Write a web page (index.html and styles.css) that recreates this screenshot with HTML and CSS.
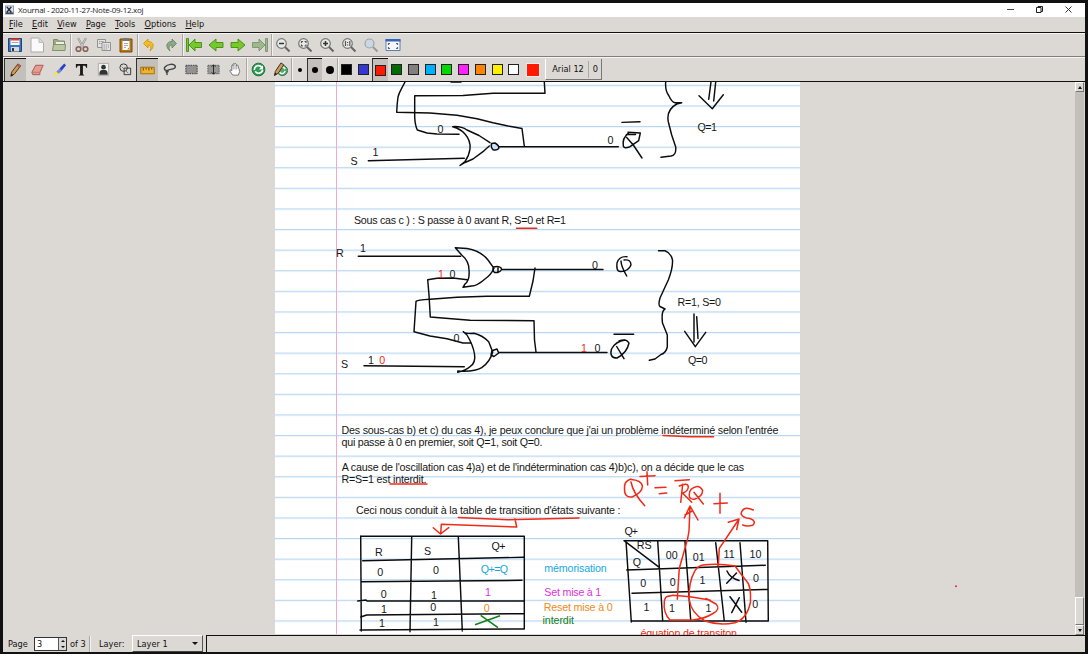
FILE: index.html
```html
<!DOCTYPE html>
<html lang="fr">
<head>
<meta charset="utf-8">
<title>Xournal - 2020-11-27-Note-09-12.xoj</title>
<link rel="stylesheet" href="styles.css">
</head>
<body>
<div class="window">
  <header class="titlebar">
    <svg class="appicon" viewBox="0 0 10 10"><rect x=".5" y=".5" width="9" height="9" fill="#dce3ee" stroke="#8a93a0"/><path d="M2 1.500l5 6M7 1.500l-5 6M1 8.500h8" stroke="#1b2438" stroke-width="1.500"/></svg>
    <span class="title">Xournal - 2020-11-27-Note-09-12.xoj</span>
    <svg class="winctl" viewBox="0 0 70 12"><path d="M1 5.500h7" stroke="#444"/><path d="M30.500 3.500h4.500v5h-4.500zM32 3.500v-1h4.500v5h-1.500" fill="none" stroke="#222"/><path d="M59.500 2.500l6 6M65.500 2.500l-6 6" stroke="#333" stroke-width="1"/></svg>
  </header>
  <nav class="menubar"><span><u>F</u>ile</span><span><u>E</u>dit</span><span><u>V</u>iew</span><span><u>P</u>age</span><span><u>T</u>ools</span><span><u>O</u>ptions</span><span><u>H</u>elp</span></nav>

  <div class="toolbar">
    <i class="btn"><svg viewBox="0 0 16 16"><path d="M1.500 1.500h13v13h-13z" fill="#3b76c0" stroke="#1d4378"/><path d="M3.500 2h9v6h-9z" fill="#fff"/><path d="M3.500 1.500h9v2h-9z" fill="#e23b2e"/><path d="M4.500 5.500h7" stroke="#aaa"/><path d="M4 10h8v4.500H4z" fill="#d8d8d8"/><path d="M5 11h2v3H5z" fill="#333"/></svg></i>
    <i class="btn"><svg viewBox="0 0 16 16"><path d="M2 1h8l4.500 4.500v9.500H2z" fill="#fafafa" stroke="#aaa"/><path d="M10 1v4.500h4.500z" fill="#ddd" stroke="#bbb"/></svg></i>
    <i class="btn"><svg viewBox="0 0 16 16"><path d="M2.500 13.500v-11h4l1 1.500h6v9" fill="#9cab82" stroke="#7f8c69"/><path d="M5 5h8v6H5z" fill="#eee"/><path d="M1.500 13.500l1-6h12l-.5 6z" fill="#bac9a0" stroke="#82906b"/></svg></i>
    <b class="sep"></b>
    <i class="btn"><svg viewBox="0 0 16 16"><path d="M4 1l5 9M12 1l-5 9" stroke="#8c8c8c" stroke-width="2"/><path d="M4 1l5 9M12 1l-5 9" stroke="#e4e4e4" stroke-width=".7"/><circle cx="4.500" cy="12" r="2.300" fill="none" stroke="#84625a" stroke-width="1.600"/><circle cx="11.500" cy="12" r="2.300" fill="none" stroke="#84625a" stroke-width="1.600"/></svg></i>
    <i class="btn"><svg viewBox="0 0 16 16"><g fill="#e3e3e3" stroke="#929292"><path d="M1.500 2.500h8v8h-8z"/><path d="M6 5.500h8.500v8H6z"/></g><path d="M3 4.500h5M3 6.500h3M7.500 8h5.500M7.500 10h5.500M7.500 12h4" stroke="#999" stroke-dasharray="1.500 .7"/></svg></i>
    <i class="btn"><svg viewBox="0 0 16 16"><path d="M2 2h12v13H2z" fill="#b97716" stroke="#7a4a08"/><path d="M4.500 4h7v9h-7z" fill="#fff"/><path d="M5 1h6v3H5z" fill="#777"/><path d="M6 6.500h4M6 8.500h4M6 10.500h2" stroke="#aaa"/><path d="M9 12.500l2-2v2z" fill="#888"/></svg></i>
    <b class="sep"></b>
    <i class="btn"><svg viewBox="0 0 16 16"><path d="M7 2L2.500 6.500 7 11V8c3 0 3.500 2.500 2 6 5-4 4-9.500-2-9.500z" fill="#f5bd20" stroke="#c79008" stroke-width=".8"/></svg></i>
    <i class="btn"><svg viewBox="0 0 16 16"><path d="M9 2l4.500 4.500L9 11V8c-3 0-3.500 2.500-2 6C2 10 3 4.500 9 4.500z" fill="#8aaa83" stroke="#66805f" stroke-width=".8"/></svg></i>
    <b class="sep"></b>
    <i class="btn"><svg viewBox="0 0 16 16" class="nav"><path d="M.5 1.500h2v13h-2zM3 8l6-6v3.500h6.500v5H9V14z"/></svg></i>
    <i class="btn"><svg viewBox="0 0 16 16" class="nav"><path d="M1 8l7-6v3.500h7v5H8V14z"/></svg></i>
    <i class="btn"><svg viewBox="0 0 16 16" class="nav"><path d="M15 8L8 2v3.500H1v5h7V14z"/></svg></i>
    <i class="btn"><svg viewBox="0 0 16 16" class="nav off"><path d="M13.500 1.500h2v13h-2zM13 8L7 2v3.500H.5v5H7V14z"/></svg></i>
    <b class="sep"></b>
    <i class="btn"><svg viewBox="0 0 16 16" class="lens"><circle cx="6.500" cy="6.500" r="4.800"/><path class="h" d="M10 10l4.500 4.500"/><path d="M4 6.500h5" class="m"/></svg></i>
    <i class="btn"><svg viewBox="0 0 16 16" class="lens"><circle cx="6.500" cy="6.500" r="4.800"/><path class="h" d="M10 10l4.500 4.500"/><path d="M4.500 6V4.500H6M7.500 4.500H9V6M9 7.500V9H7.500M6 9H4.500V7.500" class="s"/></svg></i>
    <i class="btn"><svg viewBox="0 0 16 16" class="lens"><circle cx="6.500" cy="6.500" r="4.800"/><path class="h" d="M10 10l4.500 4.500"/><path d="M4 6.500h5M6.500 4v5" class="m"/></svg></i>
    <i class="btn"><svg viewBox="0 0 16 16" class="lens"><circle cx="6.500" cy="6.500" r="4.800"/><path class="h" d="M10 10l4.500 4.500"/><path d="M4.500 4v5M8.800 4v5M6.600 5v1M6.600 7.500v1" class="s"/></svg></i>
    <i class="btn"><svg viewBox="0 0 16 16" class="lens pale"><circle cx="6.500" cy="6.500" r="4.500"/><path class="h" d="M10 10l4.500 4.500"/></svg></i>
    <i class="btn"><svg viewBox="0 0 16 16"><path d="M1 2.500h14v11H1z" fill="#f6f8fb" stroke="#5d7fb0"/><path d="M.5 2h15v2.500H.5z" fill="#3567b8"/><path d="M3.500 8V6.500H5M11 6.500h1.500V8M12.500 10v1.500H11M5 11.500H3.500V10" fill="none" stroke="#59657b" stroke-width="1.200"/></svg></i>
  </div>

  <div class="toolbar second">
    <i class="btn on"><svg viewBox="0 0 16 16"><path d="M3 14l1-4.500 6.500-8.500 3 2L7 11.500z" fill="#d49a52" stroke="#50300f"/><path d="M10.500 1l3 2-1.500 2-3-2z" fill="#b65e57"/><path d="M3 14.500l.7-3 2 1.500z" fill="#111"/></svg></i>
    <i class="btn"><svg viewBox="0 0 16 16"><path d="M2 11L6 3.500h8l-3.500 8v2H3z" fill="#eb9a90" stroke="#9a5b54"/><path d="M2 11h8.500L14 3.500" fill="none" stroke="#c4736a"/></svg></i>
    <i class="btn"><svg viewBox="0 0 16 16"><path d="M8 7l5-5.500 2 2L10 9.500z" fill="#2841c9"/><path d="M4.500 10.500L8 7l2.500 2.500L7 12.500z" fill="#6e88dc"/><path d="M1.500 14.500l3-4.500 2.500 2.500z" fill="#ffe900"/></svg></i>
    <i class="btn"><svg viewBox="0 0 16 16"><path d="M2 2h12v4h-1l-1-2H9.500v9l1.500 1v.5H5V14l1.500-1V4H4L3 6H2z" fill="#181818"/></svg></i>
    <i class="btn"><svg viewBox="0 0 16 16"><path d="M2.500 1.500h11v13h-11z" fill="#f2f2f2" stroke="#aaa"/><circle cx="8" cy="5.500" r="2.500" fill="#333"/><path d="M3.500 13.500c0-5 2-5 4.500-5s4.500 0 4.500 5z" fill="#333"/></svg></i>
    <i class="btn"><svg viewBox="0 0 16 16" fill="none" stroke="#333"><circle cx="6" cy="6" r="4"/><path d="M6.500 6.500h7v7h-7z"/><path d="M4 5l7 7" stroke="#777"/></svg></i>
    <i class="btn on"><svg viewBox="0 0 16 16"><path d="M.8 4.500h14.400v7H.8z" fill="#edb42f" stroke="#a66b07"/><path d="M3.500 5v3M6.500 5v2M9.500 5v3M12.500 5v2" stroke="#6a4200"/></svg></i>
    <i class="btn"><svg viewBox="0 0 16 16" fill="none" stroke="#444" stroke-width="1.500"><path d="M4.500 9C0 7.500 4 3 9 2.500s7 3 3.500 4.500-7 1-8 2.500 2 2 2 0-2 1-1 4.500"/></svg></i>
    <i class="btn"><svg viewBox="0 0 16 16"><path d="M2 3.500h12v9H2z" fill="#929292" stroke="#333" stroke-dasharray="1.500 1"/></svg></i>
    <i class="btn"><svg viewBox="0 0 16 16"><path d="M2 3.500h12v9H2z" fill="#999" stroke="#555" stroke-dasharray="1.500 1"/><path d="M8 3v10M6 5l2-2 2 2M6 11l2 2 2-2" fill="none" stroke="#222"/></svg></i>
    <i class="btn"><svg viewBox="0 0 16 16"><path d="M5 14L2 9.500c-.5-1 1-1.500 2 0V4c0-1.200 1.500-1.200 1.500 0V2.500c0-1.200 1.700-1.200 1.700 0 0-1.200 1.800-1.200 1.800.3V4c0-1.200 1.700-1 1.700.3L12.500 10 11 14z" fill="#fff" stroke="#555" stroke-width=".8"/><path d="M5.500 4v4M7.500 3v5M9.300 4v4" stroke="#777" stroke-width=".7"/></svg></i>
    <b class="sep"></b>
    <i class="btn"><svg viewBox="0 0 16 16"><circle cx="8" cy="8" r="6.800" fill="#2f9b53" stroke="#186f35"/><path d="M3.500 8.500c0-5 6-6 8-2.500M12.500 8.500c-1 4-6 4.500-8 1.500" fill="none" stroke="#fff" stroke-width="1.700"/><path d="M12.800 3.500v4.500H8.500z" fill="#fff"/></svg></i>
    <i class="btn"><svg viewBox="0 0 16 16"><circle cx="10" cy="9" r="5.500" fill="#55a971" stroke="#28733e"/><path d="M7 11c2 2.500 5 1.500 6-1.500M9 5.500c2-.5 3 .5 4 2" fill="none" stroke="#fff" stroke-width="1.500"/><path d="M1.500 14.500l1-4.500L8.500 1l3 2-6 9z" fill="#cf9c60" stroke="#41270f"/><path d="M1.500 14.500l1-3 1.500 1z" fill="#111"/></svg></i>
    <b class="sep"></b>
    <i class="btn dotbtn"><em class="dot"></em></i>
    <i class="btn dotbtn on"><em class="dot d2"></em></i>
    <i class="btn dotbtn"><em class="dot d3"></em></i>
    <b class="sep"></b>
    <i class="swatch"><em class="black"></em></i>
    <i class="swatch"><em class="blue"></em></i>
    <i class="swatch on"><em class="red"></em></i>
    <i class="swatch"><em class="green"></em></i>
    <i class="swatch"><em class="gray"></em></i>
    <i class="swatch"><em class="cyan"></em></i>
    <i class="swatch"><em class="lime"></em></i>
    <i class="swatch"><em class="magenta"></em></i>
    <i class="swatch"><em class="orange"></em></i>
    <i class="swatch"><em class="yellow"></em></i>
    <i class="swatch"><em class="white"></em></i>
    <i class="current"></i>
    <span class="fontbtn"><span>Arial 12</span><span class="fsize">0</span></span>
  </div>

  <main class="work">
    <svg class="sheet" width="1072" height="553" viewBox="3 82 1072 553">
      <defs><pattern id="rules" x="0" y="84.800" width="40" height="20.600" patternUnits="userSpaceOnUse"><path d="M0 .6h40" stroke="#b7d7f3" stroke-width="1.200"/></pattern></defs>
      <path d="M275 82h525v552H275z" fill="#fff"/>
      <path d="M275 82h525v552H275z" fill="url(#rules)"/>
      <path d="M336.500 82v552" stroke="#f3a9cb"/>

      <g class="ink">
        <path d="M405 82C401 90 399 92 398 97Q397 104 396.700 112.300L430 113 457 115.300 477 118.700 493 122.700 508 126 522 128.500 524.300 146"/>
        <path d="M544.300 82L545 93.300H493L463 95.500 414.700 95.700V117Q415 125 417.300 130L427 133 437 134 459 134.300"/>
        <path d="M451 82h10"/>
        <path d="M452.700 126.700Q461 129 465 134Q471 141 470 149Q469 156 465 161.500L460 165.500M452.700 126.700Q461 126 467 130L479 135.500 490 142.700M489.300 146Q487 148 483 151.700L473 159 465 162.500 460 165.500"/>
        <path class="bub" d="M491.500 143.500L495 143Q499.500 145.500 498.700 148.500 497 150.500 493 149.700 490.500 147 491.500 143.500z"/>
        <path d="M368.300 160.700L464.300 158.300M499 146.700H618.300"/>
        <path d="M622 122.400L640 121.700M628.300 133.300Q622 138 623.300 146Q624 149 630 146.700L638.700 140.700 640.300 133 628 132.300M626.500 134.500h9M626.700 137.500L633.300 145 642 158"/>
        <path d="M665.700 82Q665 91 669 96Q671.700 102 675 102.700H681.700L676.700 104Q666 110 668.300 121.700L671.700 135 675.700 147Q676.500 155 671 156L661 157.300"/>
        <path d="M711 82L708.700 99.300M715.700 82L713.700 101M699 95.700L712.300 108.700 723.300 94.700"/>

        <path d="M358.300 256.300H460.700"/>
        <path d="M455.300 247.700L461.700 255Q469 261 469 270Q470 280 465 284L463 287.300M455.300 247.700L467 248.500Q481 251 488 260L494 268.300Q491 275 485 279Q477 286 471.700 286L463 287.300"/>
        <path d="M493.500 267Q501 265.500 501.700 269.300 500 273 494.500 272.500 492 270 493.500 267zM498 267.500v5M502 269.500H603"/>
        <path d="M535 268L533 281 529.300 296.300H487L457 297.300 430 299.300Q417 300 416 301.500L414 331.700 430 336 447 338.700 463 343H471"/>
        <path d="M467.300 279.700L453 278 437 278.300 427.700 279.700 429 295 430.300 317 470 320.300 534 320.700 534.500 340 536 352"/>
        <path d="M463.300 331.700L467 335Q473 345 474.500 354Q476 363 470 366.700 466 370 457.700 372.300M463.300 331.700Q466 334 474 333.300Q482 335 488.700 341.700L492.700 352Q490 362 481.700 367.700 475 372 457.700 371"/>
        <path d="M492 350.700L497 349 498.700 353 494 356.500 491 355zM498.700 352.500H607M364 365.700L464.300 366.700"/>
        <path d="M627 256.700Q619 256 617 263Q616 271 620 271.500Q628 272 631 265Q631 259 624 260M621 261Q621 266 626.700 276"/>
        <path d="M614 334.300H633.700M625 340Q616 341 611.500 349Q609 358 617 358Q627 353 629 343Q626 338 619 341M616.700 346.500L624 358.700"/>
        <path d="M658.500 250.700L665 250.700Q671 253 672.500 260Q673 268 668.300 280L660 298Q658 305 660 306.500L665 309Q661 311 662.500 323L667.300 335V347Q666 353 661 354.500L655 359 649.300 360.300"/>
        <path d="M694 314V342M696.700 316.700L698 338.500M684.700 331.300L695.300 346.700 705.700 332.300"/>

        <path d="M360.700 536.300H524.300V629L360 630M360.700 536L361.300 631M362.700 560.700L523.500 557.300M361.300 581.700L522 580.300M357.700 601L366 600 367 601H524M360.700 617L366.700 615 524 613.700M411.700 537.300L410 631.700M458.300 536.700L462.300 631"/>
        <path d="M624 540.700H767.700L768.300 621H631M626 541L631.300 622M626.700 570L765.300 565.300M632 593.300L767.700 589.300M657.700 541L662.700 621M685 541.700L690.700 620M715.700 542.700L724.300 621M740 542.700L746 622.300M624 540.700L659.300 567.300"/>
        <path d="M727 571Q730 578 739 580.500M736.500 573L726.700 583.300M730 596.700L741.700 612.300M739.300 597.700L731.700 612.700"/>
      </g>
      <path class="grn" d="M475 624.700L500 615.700M480.700 615.300L498 627.700"/>

      <g class="pen">
        <path d="M516.500 228.300H536.700M390 484H427M663 435.500L690 436.800H713.500M458.300 517.400L508 519.800 579 518M515 519L516.700 527 441.300 524.300 440.700 534M433.300 527.700L440.500 534 448.700 527.700"/>
        <path d="M631 479Q624 481 624.500 488Q624 498 632 497Q642 493 642.500 486Q641 480 631 479.500M631 482Q633 493 644.700 505.700M640 476.500L655 475.700M647 471.700L647.700 485M655 487.700L666 487.300M659.300 493.700L666.700 493"/>
        <path d="M675 480.700L689.300 479.700M682.700 484.300L680.700 502.300M679.300 486Q688 482 688.300 487Q688 491 682.700 493.300L691.700 502.300M697 486.500Q689 488 689.300 495Q689 500 695 499Q703 496 702.500 490Q700 486 697 486.500M694 492.300L703.300 504M720 493.300V513.300M714 503.700L727.300 503M753.300 510Q743 505 741 514Q743 518 750 518.500Q757 521 752.700 525.300 747 527 742.700 525"/>
        <path d="M684.300 518L690 506 698 520M685 515L692 511M690 506L689 531Q688 539 685 548.300L679.300 568.300 677.300 599.300M728.300 522.300L739 519 736.700 529.500M739 519L725 540 719.300 548.300 718.300 566"/>
        <path d="M666.700 596.700L673 595.300 690 596.700 710 600M706 598.500L716 604Q721 609 713 613.500 704 619 693 620H670Q663 613 664.300 601.700 665 596 669 596"/>
        <path d="M735 566Q718 563 703 565Q698 566 695 570.700Q688 583 689.300 600Q691 613 705 621Q719 626 735 622.700Q747 619 750.500 602Q751 588 748 583L741.700 575 735 566"/>
        <circle cx="956" cy="586.300" r="1"/>
      </g>

      <g class="txt">
        <text x="437.500" y="132.900">0</text><text x="372.500" y="156">1</text><text x="350.500" y="164.900">S</text>
        <text x="607.500" y="143.800">0</text><text x="697.500" y="130.800" textLength="19.500">Q=1</text>
        <text x="354" y="223.700" textLength="212">Sous cas c ) : S passe à 0 avant R, S=0 et R=1</text>
        <text x="336" y="257">R</text><text x="360" y="251.700">1</text><text x="438" y="278" class="r">1</text><text x="449.500" y="278">0</text>
        <text x="453.500" y="341.500">0</text><text x="341" y="367.500">S</text><text x="368" y="364">1</text><text x="379.300" y="364" class="r">0</text>
        <text x="592" y="269">0</text><text x="677.500" y="306.300" textLength="43.500">R=1, S=0</text><text x="581" y="352" class="r">1</text><text x="594.500" y="352">0</text><text x="688" y="363.700" textLength="19.500">Q=0</text>
        <text x="341.500" y="433.700" textLength="437">Des sous-cas b) et c) du cas 4), je peux conclure que j'ai un problème indéterminé selon l'entrée</text>
        <text x="341.500" y="446" textLength="201">qui passe à 0 en premier, soit Q=1, soit Q=0.</text>
        <text x="341.700" y="470.500" textLength="402.500">A cause de l'oscillation cas 4)a) et de l'indétermination cas 4)b)c), on a décide que le cas</text>
        <text x="341.500" y="482.700" textLength="85">R=S=1 est interdit.</text>
        <text x="356" y="514" textLength="264.500">Ceci nous conduit à la table de transition d'états suivante :</text>
        <text x="375" y="555.500">R</text><text x="424" y="555">S</text><text x="491.500" y="549.500" textLength="14">Q+</text>
        <text x="377.300" y="575.500">0</text><text x="433" y="573.500">0</text><text x="480.700" y="572.700" textLength="27.500" fill="#16a8e2">Q+=Q</text><text x="544.300" y="572.300" textLength="62.500" fill="#16a8e2">mémorisation</text>
        <text x="380.700" y="598">0</text><text x="431" y="598.500">1</text><text x="485" y="596" fill="#dc32d8">1</text><text x="544.300" y="595.700" textLength="57" fill="#dc32d8">Set mise à 1</text>
        <text x="381" y="612.500">1</text><text x="430.300" y="611.300">0</text><text x="483.700" y="612" fill="#ef8a17">0</text><text x="543.700" y="611" textLength="69" fill="#ef8a17">Reset mise à 0</text>
        <text x="379" y="627">1</text><text x="433" y="626">1</text><text x="542.500" y="624.300" textLength="31.500" fill="#118019">interdit</text>
        <text x="624.500" y="534.500" textLength="13.500">Q+</text><text x="636.700" y="549">RS</text><text x="632.700" y="565.500">Q</text>
        <text x="665.700" y="558.500">00</text><text x="692.700" y="561">01</text><text x="723.500" y="558">11</text><text x="749.500" y="557.500">10</text>
        <text x="640.300" y="587">0</text><text x="669.700" y="586">0</text><text x="699.500" y="583.500">1</text><text x="753" y="582">0</text>
        <text x="643.500" y="610.500">1</text><text x="669" y="611.500">1</text><text x="705.500" y="611.500">1</text><text x="752.300" y="608">0</text>
        <text x="640.500" y="637" textLength="96.500" class="r">équation de transiton</text>
      </g>
    </svg>
    <aside class="scroll"><i class="sbtn up"></i><i class="trough"></i><i class="thumb"></i><i class="sbtn down"></i></aside>
  </main>

  <footer class="status">
    <span class="lbl page">Page</span>
    <span class="spin"><span>3</span><span class="arrows"><i class="tri up"></i><i class="tri"></i></span></span>
    <span class="lbl of">of 3</span><b class="sep"></b>
    <span class="lbl layer">Layer:</span>
    <span class="combo"><span>Layer 1</span><i class="tri big"></i></span>
    <span class="msg"></span>
  </footer>
</div>
</body>
</html>
```

FILE: styles.css
```css
* { box-sizing: border-box; }
html, body { height: 100%; }
body { margin: 0; padding: 3px 3px 2px; background: #111; overflow: hidden; font: 8.2px "DejaVu Sans", sans-serif; color: #111; }
.window { width: 1082px; height: 649px; background: #dcd9d5; display: flex; flex-direction: column; overflow: hidden; }
.titlebar { height: 14px; flex: none; background: #fff; display: flex; align-items: center; padding-left: 2px; }
.appicon { width: 9px; height: 10px; }
.title { font: 8px/12px "Open Sans", sans-serif; letter-spacing: -.27px; color: #222; margin-left: 4px; white-space: nowrap; }
.winctl { width: 70px; height: 12px; margin-left: auto; margin-right: 9px; }
.menubar { height: 16px; flex: none; border-bottom: 1px solid #111; display: flex; gap: 9.3px; padding-left: 6px; line-height: 15px; }
.menubar u { text-underline-offset: 1px; }
.toolbar { height: 24px; flex: none; display: flex; align-items: stretch; padding-left: 1px; border-top: 1px solid #f6f5f3; border-bottom: 1px solid #827c7b; }
.second { height: 25px; border-bottom-color: #111; }
.btn { width: 22px; flex: none; display: flex; align-items: center; justify-content: center; }
.btn svg { width: 16px; height: 16px; }
.second .btn svg { width: 15px; height: 15px; }
.on { background: #c3bfbb; border-top: 1px solid #111; border-left: 1px solid #333; }
.sep { width: 1px; flex: none; background: #aaa6a3; box-shadow: 1px 0 #f4f2f0; }
.nav { fill: #76c928; stroke: #438b13; stroke-width: .9; }
.off { fill: #9fb78f; stroke: #78936a; }
.lens { fill: none; stroke: #666; }
.lens circle { fill: #e9e9e7; stroke: #777; stroke-width: 1.2; }
.lens .h { stroke: #666; stroke-width: 2; }
.lens .m { stroke: #333; stroke-width: 1.5; }
.lens .s { stroke: #555; stroke-width: 1.2; }
.lens.pale circle { fill: #c9d8e3; stroke: #9aa4aa; }
.lens.pale .h { stroke: #999; }
.dotbtn { width: 15px; }
.dot { width: 4px; height: 4px; border-radius: 50%; background: #000; }
.d2 { width: 6px; height: 6px; }
.d3 { width: 8px; height: 8px; }
.swatch { width: 16.75px; flex: none; display: flex; align-items: center; justify-content: center; }
.swatch em { width: 11px; height: 11px; border: 1px solid #222; }
.black { background: #000; } .blue { background: #3539d1; } .red { background: #ff1a00; }
.green { background: #006b00; } .gray { background: #808080; } .cyan { background: #00b0ff; }
.lime { background: #00d800; } .magenta { background: #ff22ff; } .orange { background: #ff8500; }
.yellow { background: #fff000; } .white { background: #fff; }
.current { width: 14px; height: 14px; flex: none; align-self: center; margin-left: 4px; background: #ff1a00; border: 1px solid #f3eeea; }
.fontbtn { display: flex; align-items: center; margin: 1px 0 1px 5px; width: 57px; padding-left: 6px; border-left: 1px solid #fff; border-right: 1px solid #777; border-bottom: 1px solid #777; white-space: nowrap; }
.fsize { margin-left: 4px; padding-left: 4px; height: 17px; line-height: 17px; border-left: 1px solid #aaa; }
.work { flex: 1; display: flex; min-height: 0; }
.sheet { flex: none; display: block; }
.ink path { fill: none; stroke: #0c0c0c; stroke-width: 1.45; stroke-linejoin: round; stroke-linecap: round; }
.ink .bub { fill: #c9e3f8; }
.pen path { fill: none; stroke: #ef2b17; stroke-width: 1.5; stroke-linejoin: round; stroke-linecap: round; }
.pen circle { fill: #ef2b17; }
.grn { fill: none; stroke: #118019; stroke-width: 1.5; }
.txt { font: 10.7px "Liberation Sans", Arial, sans-serif; fill: #161616; }
.txt .r { fill: #ef2b17; }
.scroll { width: 9px; display: flex; flex-direction: column; background: #c3bfbb; }
.sbtn, .thumb { flex: none; height: 10px; background: #dcd9d5; border: 1px solid #fff; border-right-color: #777; border-bottom-color: #777; display: flex; align-items: center; justify-content: center; }
.trough { flex: 1; }
.thumb { height: 28px; }
.sbtn::after { content: ""; border: 2.5px solid transparent; border-top: 3px solid #111; border-bottom: 0; }
.sbtn.up::after { border-top: 0; border-bottom: 3px solid #111; }
.status { height: 17px; flex: none; display: flex; align-items: center; padding-left: 5px; white-space: nowrap; }
.page { width: 26px; }
.spin { width: 33px; height: 14px; background: #fff; border: 1px solid #333; display: flex; align-items: center; padding-left: 2px; }
.arrows { margin-left: auto; width: 8px; height: 12px; background: #dcd9d5; border-left: 1px solid #555; display: flex; flex-direction: column; align-items: center; justify-content: space-around; }
.tri { border: 2px solid transparent; border-top: 2.5px solid #111; border-bottom: 0; }
.tri.up { border-top: 0; border-bottom: 2.5px solid #111; }
.tri.big { border-width: 3.5px 3.5px 0; margin-left: auto; }
.of { margin-left: 3px; width: 19px; }
.status .sep { height: 16px; }
.layer { margin-left: 9px; width: 33px; }
.combo { width: 71px; height: 17px; display: flex; align-items: center; padding: 0 4px; border-left: 1px solid #fff; border-top: 1px solid #fff; border-right: 1px solid #555; border-bottom: 1px solid #444; }
.msg { flex: 1; height: 17px; margin-left: 3px; border-left: 1px solid #111; border-top: 1px solid #111; }
```
